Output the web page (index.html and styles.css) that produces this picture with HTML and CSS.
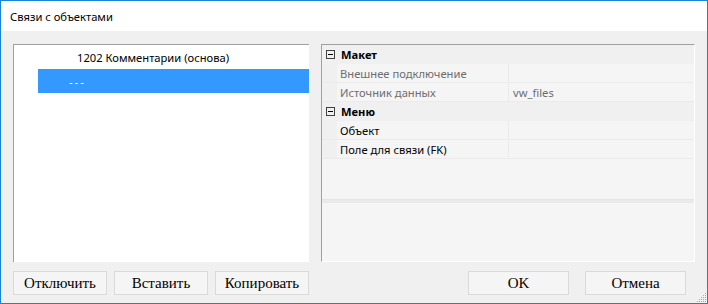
FILE: index.html
```html
<!DOCTYPE html>
<html lang="ru">
<head>
    <meta charset="UTF-8">
    <title>Связи с объектами</title>
    <link rel="stylesheet" href="styles.css">
</head>
<body>
    <div class="window">
        <div class="titlebar">Связи с объектами</div>
        <div class="client">
            <div class="panes">
                <div class="tree">
                    <div class="tree-row root">1202 Комментарии (основа)</div>
                    <div class="tree-row child selected">---</div>
                </div>
                <div class="grid">
                    <div class="grid-rows">
                        <div class="category"><span class="toggle"></span>Макет</div>
                        <div class="prop readonly">
                            <span class="margin"></span>
                            <span class="name">Внешнее подключение</span>
                            <span class="value"></span>
                        </div>
                        <div class="prop readonly">
                            <span class="margin"></span>
                            <span class="name">Источник данных</span>
                            <span class="value">vw_files</span>
                        </div>
                        <div class="category"><span class="toggle"></span>Меню</div>
                        <div class="prop">
                            <span class="margin"></span>
                            <span class="name">Объект</span>
                            <span class="value"></span>
                        </div>
                        <div class="prop">
                            <span class="margin"></span>
                            <span class="name">Поле для связи (FK)</span>
                            <span class="value"></span>
                        </div>
                    </div>
                    <div class="splitter"></div>
                    <div class="description"></div>
                </div>
            </div>
            <div class="buttons">
                <div class="group">
                    <button class="btn">Отключить</button>
                    <button class="btn">Вставить</button>
                    <button class="btn">Копировать</button>
                </div>
                <div class="group dialog">
                    <button class="btn wide">OK</button>
                    <button class="btn wide">Отмена</button>
                </div>
            </div>
            <svg class="grip" width="11" height="11" viewBox="0 0 11 11">
                <g fill="#a8a8a8">
                    <rect x="9" y="1" width="1" height="1"/>
                    <rect x="7" y="3" width="1" height="1"/><rect x="9" y="3" width="1" height="1"/>
                    <rect x="5" y="5" width="1" height="1"/><rect x="7" y="5" width="1" height="1"/><rect x="9" y="5" width="1" height="1"/>
                    <rect x="3" y="7" width="1" height="1"/><rect x="5" y="7" width="1" height="1"/><rect x="7" y="7" width="1" height="1"/><rect x="9" y="7" width="1" height="1"/>
                    <rect x="1" y="9" width="1" height="1"/><rect x="3" y="9" width="1" height="1"/><rect x="5" y="9" width="1" height="1"/><rect x="7" y="9" width="1" height="1"/><rect x="9" y="9" width="1" height="1"/>
                </g>
            </svg>
        </div>
    </div>
</body>
</html>
```

FILE: styles.css
```css
* {
    box-sizing: border-box;
}
body {
    margin: 0;
    font-family: 'Noto Sans', 'Open Sans', Arial, sans-serif;
    font-size: 11.2px;
    color: #000000;
}
.window {
    width: 708px;
    height: 304px;
    border: 1px solid #1883d7;
    display: flex;
    flex-direction: column;
    background: #FFFFFF;
}
.titlebar {
    height: 30px;
    line-height: 31px;
    padding-left: 9px;
    background: #FFFFFF;
}
.client {
    flex: 1;
    background: #F0F0F0;
    padding: 13px 12px 8px 12px;
    display: flex;
    flex-direction: column;
    gap: 9px;
    position: relative;
}
.panes {
    height: 218px;
    display: flex;
    gap: 12px;
}
.tree {
    width: 296px;
    background: #FFFFFF;
    border-top: 1px solid #A0A0A0;
    border-left: 1px solid #A0A0A0;
}
.tree-row {
    height: 24px;
    line-height: 25px;
    white-space: nowrap;
}
.tree-row.root {
    padding-left: 63px;
}
.tree-row.child {
    margin-left: 24px;
    padding-left: 31px;
    letter-spacing: 2px;
}
.tree-row.selected {
    background: #3399FF;
    color: #FFFFFF;
}
.grid {
    flex: 1;
    display: flex;
    flex-direction: column;
    border-top: 1px solid #A0A0A0;
    border-left: 1px solid #A0A0A0;
    border-right: 1px solid #FFFFFF;
    border-bottom: 1px solid #FFFFFF;
}
.grid-rows {
    flex: 1;
    background: #F5F5F5;
}
.category {
    height: 19px;
    line-height: 20px;
    background: #F0F0F0;
    font-weight: 700;
    display: flex;
    align-items: center;
}
.toggle {
    width: 9px;
    height: 9px;
    border: 1px solid #404040;
    margin: 0 6px 0 4px;
    position: relative;
}
.toggle::after {
    content: '';
    position: absolute;
    left: 1px;
    top: 3px;
    width: 5px;
    height: 1px;
    background: #000000;
}
.prop {
    height: 19px;
    line-height: 19px;
    display: flex;
    border-bottom: 1px solid #EBEBEB;
}
.prop .margin {
    width: 15px;
    background: #F0F0F0;
}
.prop .name {
    width: 172px;
    padding-left: 3px;
    border-right: 1px solid #EBEBEB;
    white-space: nowrap;
}
.prop .value {
    flex: 1;
    padding-left: 4px;
}
.prop.readonly {
    color: #6D6D6D;
}
.splitter {
    height: 4px;
    background: #EAEAEA;
    border-top: 1px solid #E4E4E4;
}
.description {
    height: 58px;
    background: #F5F5F5;
}
.buttons {
    height: 24px;
    display: flex;
    justify-content: space-between;
}
.group {
    display: flex;
    gap: 7px;
}
.group.dialog {
    gap: 16px;
    padding-right: 9px;
}
.btn {
    width: 94px;
    height: 24px;
    margin: 0;
    padding: 0;
    background: #F5F5F5;
    border: 1px solid #DADADA;
    font-family: 'Liberation Serif', 'Times New Roman', serif;
    font-size: 15px;
    color: #000000;
}
.btn.wide {
    width: 101px;
}
.grip {
    position: absolute;
    right: 0;
    bottom: 0;
}
```
